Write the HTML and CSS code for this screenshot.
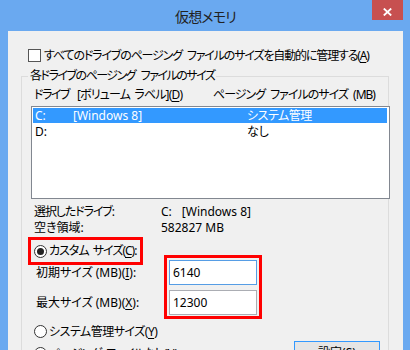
FILE: index.html
```html
<!DOCTYPE html>
<html lang="ja">
<head>
<meta charset="utf-8">
<title>仮想メモリ</title>
<link rel="stylesheet" href="styles.css">
</head>
<body>
<div class="window">
  <div class="titlebar">
    <div class="tb-side"></div>
    <div class="title">仮想メモリ</div>
    <div class="tb-side tb-right">
      <div class="close">
        <svg width="9" height="8" viewBox="0 0 9 8"><path d="M0.8 0.5 L8.2 7.5 M8.2 0.5 L0.8 7.5" stroke="#fff" stroke-width="1.8" fill="none"/></svg>
      </div>
    </div>
  </div>
  <div class="client">
    <div class="check-row">
      <span class="checkbox"></span>
      <span class="txt ls-auto">すべてのドライブのページング ファイルのサイズを自動的に管理する(<u>A</u>)</span>
    </div>
    <fieldset class="group">
      <legend class="ls-legend">各ドライブのページング ファイルのサイズ</legend>
      <div class="list-head">
        <span class="h-drive"><span class="ls-drive">ドライブ</span><span class="h-label ls-vol">[ボリューム ラベル](<u>D</u>)</span></span>
        <span class="h-size ls-size">ページング ファイルのサイズ (MB)</span>
      </div>
      <div class="listbox">
        <div class="row selected"><span>C:</span><span>[Windows 8]</span><span class="ls-sys">システム管理</span></div>
        <div class="row"><span>D:</span><span></span><span>なし</span></div>
      </div>
      <div class="info">
        <span class="ls-sel">選択したドライブ:</span><span><span>C:</span><span class="vol">[Windows 8]</span></span>
        <span>空き領域:</span><span>582827 MB</span>
      </div>
      <div class="mark custom">
        <span class="radio on"></span>
        <span class="txt ls-custom">カスタム サイズ(<u>C</u>):</span>
      </div>
      <div class="sizes">
        <div class="size-labels">
          <span>初期サイズ (MB)(<u>I</u>):</span>
          <span>最大サイズ (MB)(<u>X</u>):</span>
        </div>
        <div class="mark size-boxes">
          <div class="input focus">6140</div>
          <div class="input">12300</div>
        </div>
      </div>
      <div class="radio-row sys">
        <span class="radio"></span>
        <span class="txt ls-sys">システム管理サイズ(<u>Y</u>)</span>
      </div>
      <div class="last-row">
        <div class="radio-row">
          <span class="radio"></span>
          <span class="txt ls-size">ページング ファイルなし(<u>N</u>)</span>
        </div>
        <div class="button">設定(<u>S</u>)</div>
      </div>
    </fieldset>
  </div>
</div>
</body>
</html>
```
FILE: styles.css
```css
* { box-sizing: border-box; }
html, body { margin: 0; padding: 0; }
body {
  width: 410px;
  height: 350px;
  overflow: hidden;
  font-family: "Noto Sans", "Noto Sans CJK JP", sans-serif;
  font-size: 12px;
  font-feature-settings: "palt";
  color: #000;
}
u { text-underline-offset: 2px; }

/* per-text tracking to match the narrow UI font */
.ls-auto { letter-spacing: -1.15px; word-spacing: 3px; }
.ls-legend { letter-spacing: -1.5px; word-spacing: 4px; }
.ls-drive { letter-spacing: -1.5px; }
.ls-vol { letter-spacing: -0.85px; word-spacing: 2px; }
.ls-size { letter-spacing: -1px; word-spacing: 3px; }
.ls-sel { letter-spacing: -1.1px; }
.ls-custom { letter-spacing: -1px; word-spacing: 2px; }
.ls-sys { letter-spacing: -0.5px; }

.window {
  width: 410px;
  height: 350px;
  background: #6aa9f0;
  padding: 0 7px 0 8px;
  display: flex;
  flex-direction: column;
  overflow: hidden;
}
.titlebar {
  height: 31px;
  flex: none;
  display: grid;
  grid-template-columns: 1fr auto 1fr;
}
.title {
  font-family: "Noto Sans CJK JP", sans-serif;
  font-size: 14px;
  letter-spacing: -0.8px;
  line-height: 20px;
  padding-top: 6px;
  color: #222;
  text-align: center;
}
.tb-right { display: flex; justify-content: flex-end; align-items: flex-start; }
.close {
  width: 31px;
  height: 20px;
  background: #c75050;
  display: flex;
  justify-content: center;
  padding-top: 8px;
}
.close svg { display: block; }

.client {
  flex: 1;
  background: #f0f0f0;
  overflow: hidden;
  display: flex;
  flex-direction: column;
}
.check-row {
  margin: 18px 0 0 20px;
  height: 13px;
  display: flex;
  align-items: center;
  gap: 3px;
}
.checkbox {
  width: 13px;
  height: 13px;
  border: 1px solid #555;
  background: #fff;
  flex: none;
}
.txt { line-height: 16px; white-space: nowrap; }

.group {
  margin: 7px 14px 0 13px;
  padding: 0;
  border: 1px solid #dcdcdc;
  min-width: 0;
  height: 320px;
  flex: none;
}
.group legend {
  margin-left: 6px;
  padding: 0 2px;
  line-height: 14px;
  font-size: 12px;
}
.list-head {
  margin-top: 4px;
  padding-left: 12px;
  line-height: 16px;
  display: flex;
  white-space: nowrap;
}
.h-drive { width: 179px; display: flex; }
.h-label { margin-left: 8px; }

.listbox {
  margin: 3px 0 0 9px;
  width: 359px;
  height: 93px;
  border: 1px solid #828790;
  background: #fff;
  padding: 1px;
}
.row {
  height: 15px;
  line-height: 15px;
  padding-left: 2px;
  display: grid;
  grid-template-columns: 38px 174px 1fr;
  width: 354px;
  white-space: nowrap;
}
.row.selected { background: #3399ff; color: #fff; }
.row + .row { height: 16px; line-height: 17px; }

.info {
  margin-top: 5px;
  padding-left: 12px;
  display: grid;
  grid-template-columns: 127px 1fr;
  line-height: 16px;
  white-space: nowrap;
}
.info .vol { margin-left: 10px; }

.mark { border: 3px solid #f00; }
.custom {
  margin: 1px 0 0 6px;
  width: 115px;
  height: 28px;
  display: flex;
  align-items: center;
  padding-left: 3px;
  gap: 2px;
}
.radio {
  width: 13px;
  height: 13px;
  border: 1px solid #333;
  border-radius: 50%;
  background: #fff;
  flex: none;
  display: flex;
  align-items: center;
  justify-content: center;
}
.radio.on::after {
  content: "";
  width: 7px;
  height: 7px;
  border-radius: 50%;
  background: #222;
}

.sizes {
  margin-top: -10px;
  display: flex;
}
.size-labels {
  margin-left: 14px;
  width: 128px;
  padding-top: 5px;
  display: flex;
  flex-direction: column;
  gap: 5px;
  white-space: nowrap;
}
.size-labels span { height: 25px; line-height: 25px; }
.size-boxes {
  width: 98px;
  height: 64px;
  padding: 2px 2px 1px 2px;
  display: flex;
  flex-direction: column;
  gap: 5px;
}
.input {
  width: 88px;
  height: 25px;
  border: 1px solid #abadb3;
  background: #fff;
  padding-left: 3px;
  line-height: 23px;
}
.input.focus { border-color: #569de5; }

.radio-row {
  height: 13px;
  display: flex;
  align-items: center;
  gap: 2px;
  padding-left: 12px;
}
.sys { margin-top: 6px; }
.last-row {
  margin-top: 3px;
  display: flex;
  align-items: flex-start;
  justify-content: space-between;
  padding-right: 8px;
  height: 23px;
}
.last-row .radio-row { margin-top: 6px; }
.button {
  width: 86px;
  height: 23px;
  border: 1px solid #3399ff;
  background: #e5e5e5;
  text-align: center;
  line-height: 21px;
}
```
